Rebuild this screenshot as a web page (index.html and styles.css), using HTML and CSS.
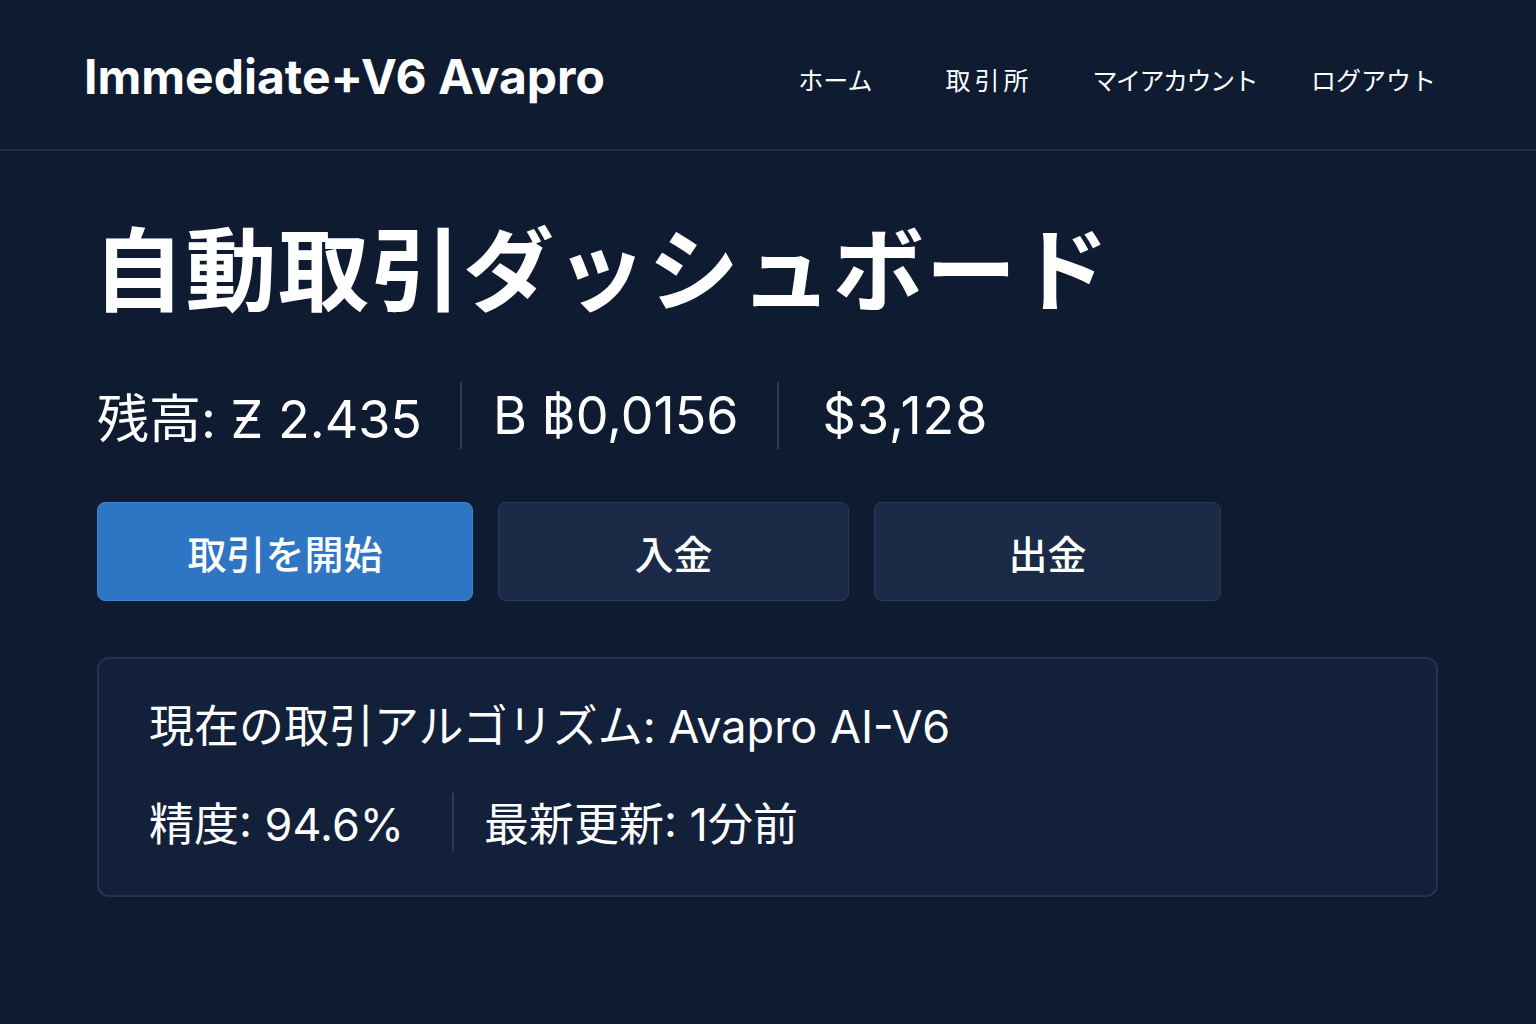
FILE: index.html
```html
<!DOCTYPE html>
<html lang="ja">
<head>
<meta charset="utf-8">
<title>Immediate+V6 Avapro</title>
<link rel="stylesheet" href="styles.css">
</head>
<body>
<div class="header">
  <div class="logo">Immediate+V6 Avapro</div>
  <div class="nav">
    <a href="#" class="nav-item nav-home">ホーム</a>
    <a href="#" class="nav-item nav-market">取引所</a>
    <a href="#" class="nav-item nav-account">マイアカウント</a>
    <a href="#" class="nav-item nav-logout">ログアウト</a>
  </div>
</div>
<div class="main">
  <h1 class="title">自動取引ダッシュボード</h1>
  <div class="balance">
    <span class="bal-item">残高: Ƶ 2.435</span>
    <span class="sep"></span>
    <span class="bal-item">B ฿0,0156</span>
    <span class="sep sep-2"></span>
    <span class="bal-item bal-usd">$3,128</span>
  </div>
  <div class="buttons">
    <button class="btn btn-primary">取引を開始</button>
    <button class="btn btn-dark btn-deposit">入金</button>
    <button class="btn btn-dark btn-withdraw">出金</button>
  </div>
  <div class="card">
    <div class="algo">現在の取引アルゴリズム: Avapro AI-V6</div>
    <div class="stats">
      <span>精度: 94.6%</span>
      <span class="sep small"></span>
      <span>最新更新: 1分前</span>
    </div>
  </div>
</div>
</body>
</html>
```
FILE: styles.css
```css
body {
  margin: 0;
  background: #0f1b31;
  color: #fff;
  font-family: Inter, "Noto Sans CJK JP", sans-serif;
}
.header {
  height: 149px;
  border-bottom: 2px solid #1e2e4b;
  display: flex;
  align-items: center;
  justify-content: space-between;
  padding: 0 100px 0 84px;
}
.logo {
  font-size: 48px;
  font-weight: 700;
  margin-top: 4px;
}
.nav {
  display: flex;
  margin-top: 8px;
}
.nav-item {
  color: #fff;
  text-decoration: none;
  font-size: 25px;
}
.nav-market {
  margin-left: 73px;
  letter-spacing: 4px;
}
.nav-account {
  margin-left: 60px;
  letter-spacing: -1.5px;
}
.nav-logout {
  margin-left: 54px;
}
.main {
  padding: 60px 98px 0 97px;
}
.title {
  margin: 0 0 0 -4px;
  font-size: 91px;
  font-weight: 700;
  line-height: 120px;
  letter-spacing: 1.5px;
}
.balance {
  display: flex;
  align-items: center;
  margin-top: 49px;
  height: 70px;
  font-size: 52px;
}
.sep {
  display: inline-block;
  width: 2px;
  height: 67px;
  background: #2a3a57;
  margin: 0 31px 0 38px;
}
.sep-2 {
  margin-right: 44px;
}
.bal-usd {
  letter-spacing: 1px;
}
.buttons {
  display: flex;
  gap: 25px;
  margin-top: 52px;
}
.btn {
  height: 99px;
  border-radius: 8px;
  font-family: inherit;
  font-size: 39px;
  font-weight: 500;
  color: #fff;
  border: 1px solid #2a3b5a;
}
.btn-primary {
  width: 376px;
  background: #2e76c3;
  border-color: #3a87d6;
}
.btn-dark {
  background: #1b2b47;
}
.btn-deposit { width: 351px; }
.btn-withdraw { width: 347px; }
.card {
  margin-top: 56px;
  height: 240px;
  border: 2px solid #233350;
  border-radius: 12px;
  background: #12203a;
  padding: 0 50px;
  box-sizing: border-box;
}
.algo {
  font-size: 45px;
  margin-top: 43px;
  line-height: 50px;
}
.stats {
  display: flex;
  align-items: center;
  margin-top: 37px;
  font-size: 45px;
}
.sep.small {
  height: 58px;
  margin: 0 30px 0 48px;
}
```
